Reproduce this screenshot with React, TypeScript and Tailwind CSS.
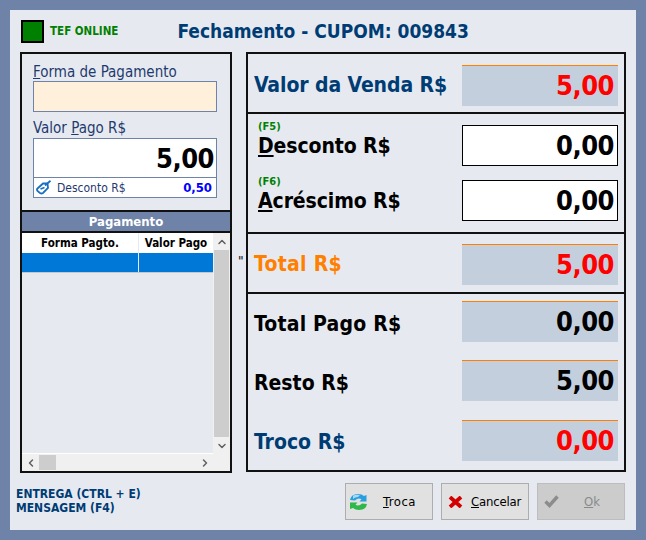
import React from 'react';
import { ChevronUp, ChevronDown, ChevronLeft, ChevronRight } from 'lucide-react';

const FONT = "font-['DejaVu_Sans_Condensed','DejaVu_Sans',sans-serif]";

const ValueBox: React.FC<{ value: string; red?: boolean }> = ({ value, red }) => (
  <div className={`flex h-[41px] w-[156px] items-center justify-end border-t border-[#ff8000] bg-[#c3cfdc] pb-[1px] pr-[4px] text-[27px] font-bold leading-none tracking-[-0.5px] ${red ? 'text-[#ff0000]' : 'text-black'}`}>
    {value}
  </div>
);

const InputBox: React.FC<{ value: string }> = ({ value }) => (
  <div className="flex h-[41px] w-[156px] items-center justify-end border border-black bg-white pb-[1px] pr-[3px] text-[27px] font-bold leading-none tracking-[-0.5px] text-black">
    {value}
  </div>
);

const KeyRow: React.FC<{ hot: string; first: string; rest: string; value: string }> = ({ hot, first, rest, value }) => (
  <div className="flex h-[41px] items-start justify-between">
    <div className="-mt-[5px] pl-[10px]">
      <div className="text-[11px] font-bold leading-[13px] text-[#008000]">{hot}</div>
      <div className="text-[21px] font-bold leading-[26px] tracking-[-0.1px] text-black">
        <span className="underline underline-offset-2">{first}</span>
        {rest}
      </div>
    </div>
    <InputBox value={value} />
  </div>
);

const TotalRow: React.FC<{ label: string; labelClass: string; value: string; red?: boolean }> = ({ label, labelClass, value, red }) => (
  <div className="flex items-center justify-between">
    <div className={`pl-[6px] text-[21px] font-bold leading-none ${labelClass}`}>{label}</div>
    <ValueBox value={value} red={red} />
  </div>
);

const TagIcon = () => (
  <svg width="16" height="15" viewBox="0 0 16 15" fill="none" stroke="#1a6fc0" strokeWidth="1.8">
    <path d="M1.500 8.500 L7 3.500 L11.500 3.500 L12 8 L7 13 Q5.500 14 4 13 L1.500 11 Q0.500 9.500 1.500 8.500 Z" />
    <path d="M9 5.500 L14.500 0.800" />
    <path d="M4.500 9 L8.500 7.500" />
  </svg>
);

const RefreshIcon = () => (
  <svg width="17" height="16" viewBox="0 0 17 16">
    <path d="M0 6 Q1 0 8 0 Q12 0 14 2 L16.500 1 V7.500 H9.500 L11.500 5.200 Q8 3.500 5 6.500 Z" fill="#2a9fe0" />
    <path d="M3 1.500 Q6 0.500 10 1 L8 3 Q5 3 3 5 Z" fill="#a5dcf5" />
    <path d="M0 8.500 H7.500 L5.500 10.800 Q9 12.500 12 9.500 L17 10 Q16 16 9 16 Q5 16 3 14 L0 15 Z" fill="#2fb84a" />
  </svg>
);

const CrossIcon = () => (
  <svg width="15" height="12" viewBox="0 0 15 12">
    <path d="M2 1 L13 11 M13 1 L2 11" stroke="#d40000" strokeWidth="3.800" />
  </svg>
);

const CheckIcon = () => (
  <svg width="15" height="13" viewBox="0 0 15 13">
    <path d="M1.500 6.500 L5.500 10.500 L13.500 1.500" fill="none" stroke="#8c8c8c" strokeWidth="3.400" />
  </svg>
);

export default function App() {
  return (
    <div className={`h-[540px] w-[646px] bg-[#6f83a8] p-[10px] ${FONT}`}>
      <div className="flex h-[520px] w-[626px] flex-col bg-[#e6eaf0]">
        {/* cabecalho */}
        <div className="flex h-[42px] items-center pt-[1px] pl-[11px]">
          <div className="h-[23px] w-[23px] border-2 border-black bg-[#008000]" />
          <div className="ml-[6px] mt-[1px] text-[11.5px] font-bold text-[#008000]">TEF ONLINE</div>
          <div className="ml-[59px] -mt-[1px] text-[19px] font-bold text-[#003c74]">Fechamento - CUPOM: 009843</div>
        </div>

        <div className="relative flex gap-[14px] pl-[10px]">
          {/* esquerda */}
          <div className="flex h-[421px] w-[212px] flex-col border-2 border-[#111]">
            <div className="h-[156px] pl-[11px] pr-[13px] pt-[9px]">
              <div className="text-[15px] leading-[18px] text-[#1f3a6e]">
                <span className="underline">F</span>orma de Pagamento
              </div>
              <div className="h-[31px] border border-[#6f83a8] bg-[#fff0dc]" />
              <div className="mt-[7px] text-[15px] leading-[18px] text-[#1f3a6e]">
                Valor <span className="underline">P</span>ago R$
              </div>
              <div className="mt-[1px] h-[60px] border border-[#6f83a8] bg-white">
                <div className="flex h-[39px] items-center justify-end border-b border-[#6f83a8] pr-[2px] text-[27px] font-bold leading-none tracking-[-0.5px] text-black">5,00</div>
                <div className="flex h-[19px] items-center pl-[2px] pr-[4px] text-[12px] text-[#1f3a6e]">
                  <TagIcon />
                  <span className="ml-[5px]">Desconto R$</span>
                  <span className="ml-auto text-[13px] font-bold text-[#0000ff]">0,50</span>
                </div>
              </div>
            </div>
            <div className="flex h-[23px] items-center justify-center border-y-2 border-[#111] bg-[#6f83a8] text-[13px] font-bold text-white">Pagamento</div>
            <div className="flex min-h-0 flex-1 flex-col">
              <div className="flex min-h-0 flex-1">
                <div className="flex flex-1 flex-col">
                  <div className="flex h-[20px] bg-white text-[11.5px] font-bold leading-[20px] text-black">
                    <div className="w-[117px] border-r border-[#e6eaf0] text-center">Forma Pagto.</div>
                    <div className="flex-1 text-center">Valor Pago</div>
                  </div>
                  <div className="flex h-[20px] border-b border-[#c8c8c8] bg-[#0078d7]">
                    <div className="w-[117px] border-r border-[#e6eaf0]" />
                  </div>
                  <div className="flex-1 border-b border-white" />
                </div>
                <div className="flex w-[17px] flex-col bg-[#f0f0f0]">
                  <div className="flex h-[17px] items-center justify-center text-[#606060]"><ChevronUp size={12} strokeWidth={3} /></div>
                  <div className="mx-[1px] flex-1 bg-[#cdcdcd]" />
                  <div className="flex h-[17px] items-center justify-center text-[#606060]"><ChevronDown size={12} strokeWidth={3} /></div>
                </div>
              </div>
              <div className="flex h-[17px] items-center bg-[#f0f0f0] text-[#606060]">
                <div className="flex w-[17px] justify-center"><ChevronLeft size={12} strokeWidth={3} /></div>
                <div className="h-[15px] w-[17px] bg-[#cdcdcd]" />
                <div className="flex-1" />
                <div className="mr-[17px] flex w-[17px] justify-center"><ChevronRight size={12} strokeWidth={3} /></div>
              </div>
            </div>
          </div>

          <div className="absolute left-[228px] top-[203px] text-[12px] font-bold leading-none text-[#333]">"</div>

          {/* direita */}
          <div className="flex h-[420px] w-[380px] flex-col border-2 border-[#111] text-[#111]">
            <div className="h-[60px] border-b-2 border-[#111] pr-[6px] pt-[11px]">
              <TotalRow label="Valor da Venda R$" labelClass="tracking-[-0.1px] text-[#003c74]" value="5,00" red />
            </div>
            <div className="flex h-[120px] flex-col gap-[14px] border-b-2 border-[#111] pr-[6px] pt-[11px]">
              <KeyRow hot="(F5)" first="D" rest="esconto R$" value="0,00" />
              <KeyRow hot="(F6)" first="A" rest="créscimo R$" value="0,00" />
            </div>
            <div className="h-[60px] border-b-2 border-[#111] pr-[6px] pt-[10px]">
              <TotalRow label="Total R$" labelClass="tracking-[0.3px] text-[#ff8000]" value="5,00" red />
            </div>
            <div className="flex flex-1 flex-col gap-[18px] pr-[6px] pt-[7px]">
              <TotalRow label="Total Pago R$" labelClass="pt-[5px] tracking-[0.2px] text-black" value="0,00" />
              <TotalRow label="Resto R$" labelClass="pt-[5px] text-black" value="5,00" />
              <div className="pt-[1px]">
                <TotalRow label="Troco R$" labelClass="pt-[4px] text-[#003c74]" value="0,00" red />
              </div>
            </div>
          </div>
        </div>

        {/* rodape */}
        <div className="flex flex-1 items-start pl-[6px] pr-[11px]">
          <div className="pt-[14px] text-[12px] font-bold leading-[14px] text-[#003c74]">
            <div>ENTREGA (CTRL + E)</div>
            <div>MENSAGEM (F4)</div>
          </div>
          <div className="ml-auto flex gap-[8px] pt-[10px]">
            <button className="flex h-[37px] w-[88px] items-center border border-[#adadad] bg-[#e1e1e1] pl-[4px] text-[13px] text-black">
              <RefreshIcon />
              <span className="ml-[16px] tracking-[0.5px]"><span className="underline">T</span>roca</span>
            </button>
            <button className="flex h-[37px] w-[88px] items-center border border-[#adadad] bg-[#e1e1e1] pl-[6px] text-[13px] text-black">
              <CrossIcon />
              <span className="ml-[8px] tracking-[-0.2px]"><span className="underline">C</span>ancelar</span>
            </button>
            <button className="flex h-[37px] w-[88px] items-center border border-[#bdbdbd] bg-[#cccccc] pl-[6px] text-[13px] text-[#8a8a8a]">
              <CheckIcon />
              <span className="ml-[25px]"><span className="underline">O</span>k</span>
            </button>
          </div>
        </div>
      </div>
    </div>
  );
}
